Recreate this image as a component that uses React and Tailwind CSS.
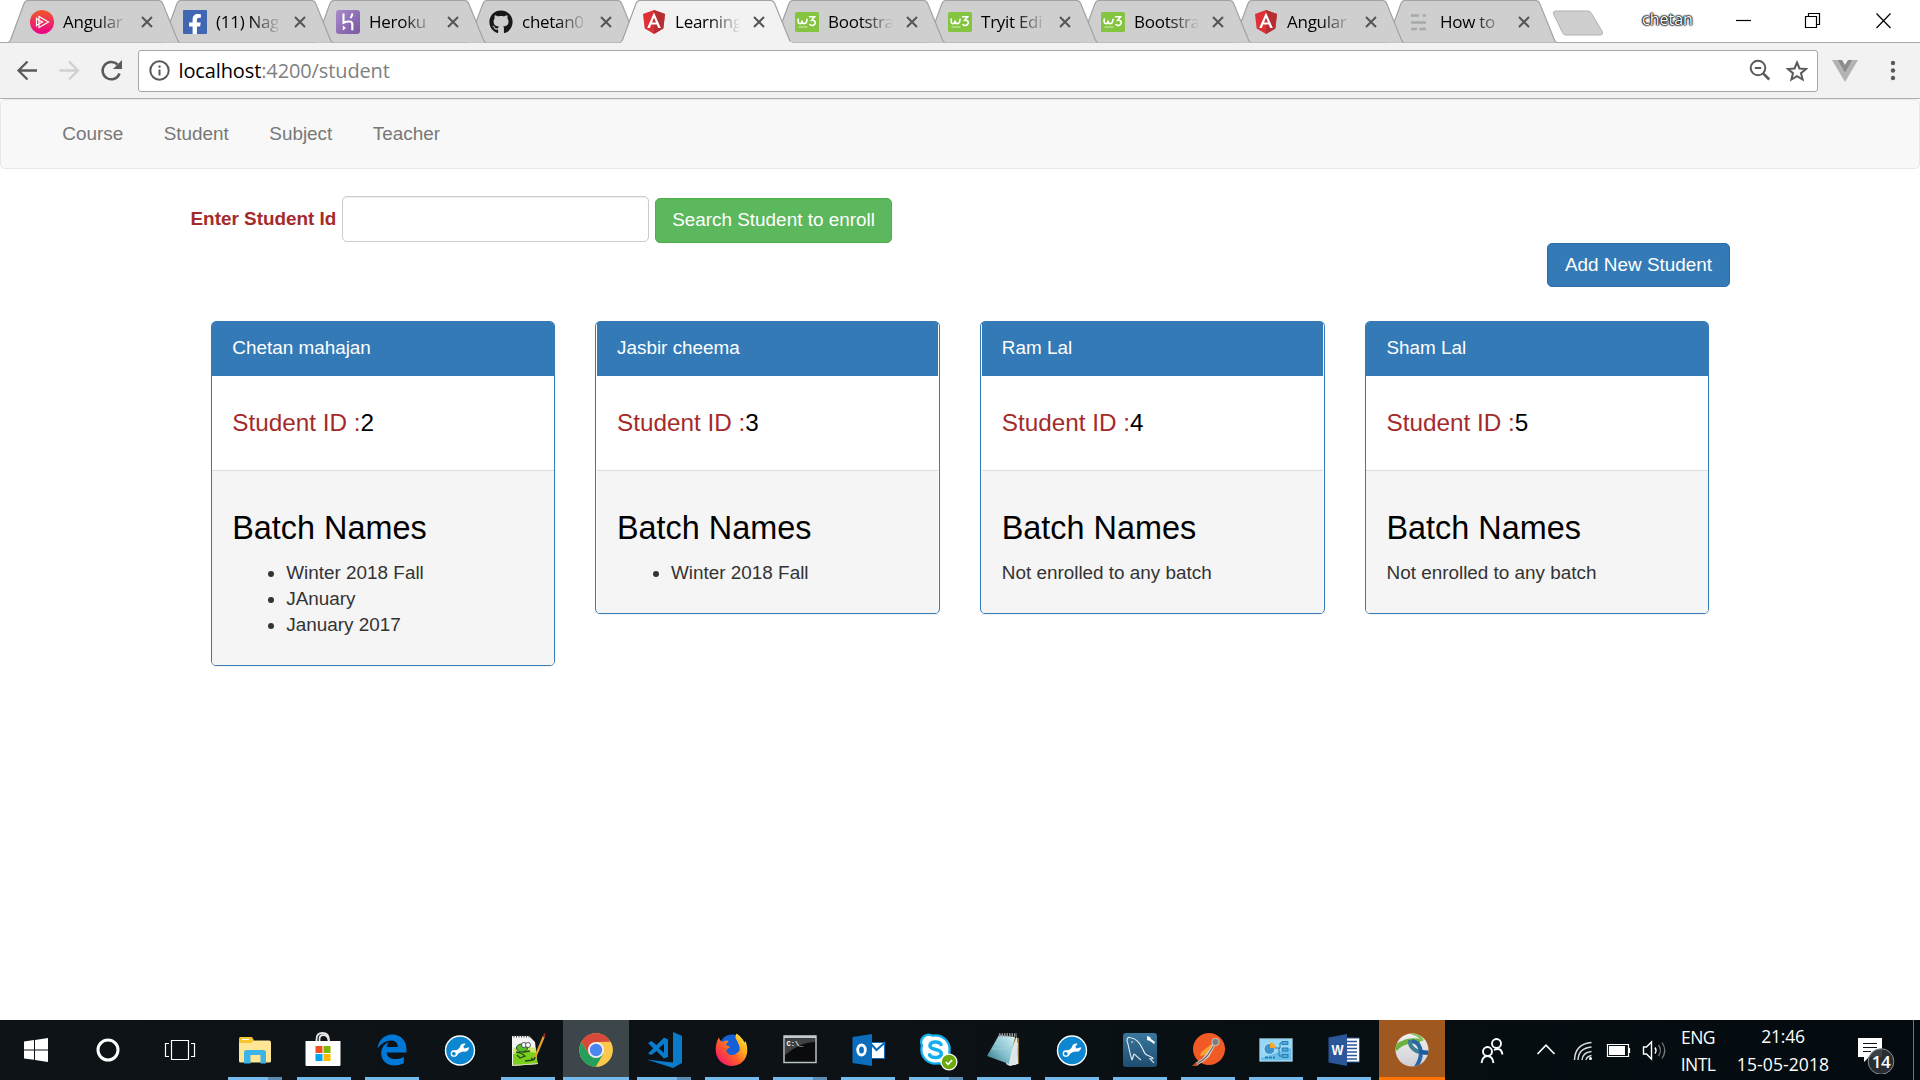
import React from "react";
import { FaFacebookF, FaGithub } from "react-icons/fa";
import { FaEdgeLegacy } from "react-icons/fa6";

/* ---------- favicons ---------- */

const Pluralsight = () => (
  <svg viewBox="0 0 24 24" className="size-6">
    <defs>
      <linearGradient id="psg" x1="0" y1="0" x2="0" y2="1">
        <stop offset="0" stopColor="#f05a28" />
        <stop offset="1" stopColor="#ec008c" />
      </linearGradient>
    </defs>
    <circle cx="12" cy="12" r="12" fill="url(#psg)" />
    <path d="M6.500 7.500v9M6.500 8.800l6 3.200-6 3.200M9 6.500l9.500 5.500L9 17.500z" fill="none" stroke="#fff" strokeWidth="1.200" />
  </svg>
);

const Facebook = () => (
  <span className="relative flex size-6 items-end justify-end overflow-hidden rounded-[1px] bg-[#4267b2] text-white">
    <FaFacebookF className="mr-[1px] -mb-[2px] size-[22px]" />
  </span>
);

const Heroku = () => (
  <span className="flex size-6 items-center justify-center rounded-[3px] bg-linear-to-br from-[#a98bcb] to-[#79589f]">
    <svg viewBox="0 0 24 24" className="size-6" fill="none" stroke="#fff" strokeWidth="2.100">
      <path d="M7.500 3.500v9.300c2-1 4.600-1.500 6.500-1.300 1.700.2 2.300 1.200 2.300 2.800v6" />
      <path d="M16.300 3.500c-.1 1.800-.7 3.100-1.800 4.500" />
      <path d="M6.800 15.500l3 2.400-3 2.500z" fill="#fff" stroke="none" />
    </svg>
  </span>
);

const Angular = () => (
  <svg viewBox="0 0 24 24" className="size-6">
    <path d="M12 0 23 4l-1.700 14.500L12 24l-9.300-5.500L1 4z" fill="#dd3137" />
    <path d="M12 0 23 4l-1.700 14.500L12 24z" fill="#b52f32" />
    <path d="M12 2.600 5.200 18h2.600l1.400-3.500h5.600l1.400 3.500h2.600zM12 7.700l2 4.700h-4z" fill="#fff" fillRule="evenodd" />
  </svg>
);

const W3 = () => (
  <svg viewBox="0 0 24 24" className="size-6">
    <rect y="2" width="24" height="20" rx="1.500" fill="#85c440" />
    <path d="M3.200 9c-.4 3.500.3 4.600 1.900 4.600s2-1.700 2-3.200c0 2 .5 3.200 2 3.200 1.900 0 2.800-1.800 2.900-4.400" fill="none" stroke="#fff" strokeWidth="1.600" strokeLinecap="round" />
    <path d="M14.500 6.800h5l-2.800 3.500c2.500-.3 3.800.8 3.500 2.900-.3 2.400-3.500 3-5.200 1.300" fill="none" stroke="#fff" strokeWidth="1.600" strokeLinecap="round" />
    <path d="M3.500 17h9" stroke="#d4edb9" strokeWidth="1" />
  </svg>
);

const Lines = () => (
  <svg viewBox="0 0 24 24" className="size-6" stroke="#a5abab" strokeWidth="2.600">
    <path d="M4 5.500h8M15.500 5.500h3.500M4 12.500h15M4 19h6M12.500 19h6.500" />
  </svg>
);

const GitHub = () => <FaGithub className="size-6 text-[#1a1718]" />;

const tabs = [
  { title: "Angular", icon: Pluralsight },
  { title: "(11) Nag", icon: Facebook },
  { title: "Heroku |", icon: Heroku },
  { title: "chetan0", icon: GitHub },
  { title: "Learning", icon: Angular, active: true },
  { title: "Bootstra", icon: W3 },
  { title: "Tryit Edi", icon: W3 },
  { title: "Bootstra", icon: W3 },
  { title: "Angular", icon: Angular },
  { title: "How to", icon: Lines },
];

const tabZ = ["z-[10]", "z-[9]", "z-[8]", "z-[7]", "z-20", "z-[5]", "z-[4]", "z-[3]", "z-[2]", "z-[1]"];

function Tab({ title, icon: Icon, active, z }) {
  return (
    <div className={`relative -mr-[19px] h-[43px] w-[172px] shrink-0 ${z}`}>
      <svg viewBox="0 0 172 43" className="absolute inset-0 h-[43px] w-[172px] overflow-visible">
        <path
          d="M-1 42.500Q.8 42 1.500 40L15 3.500Q16.200.5 19 .5H149.500Q152.500.5 153.700 3.500L168.500 40Q169.300 42.300 171 42.500"
          fill={active ? "#f2f2f2" : "#cfcfcf"}
          stroke="#a3a3a3"
          strokeWidth="1.200"
        />
        {active && <path d="M0 42.500H171" stroke="#f2f2f2" strokeWidth="1.600" />}
      </svg>
      <div className="relative flex h-[43px] items-center pl-[21px]">
        <Icon />
        <div className="ml-[9.500px] w-[68px] whitespace-nowrap font-['Open_Sans',sans-serif] text-[17px] leading-[24px] tracking-[-0.300px] text-black [mask-image:linear-gradient(to_right,black_50%,transparent_96%)]">
          {title}
        </div>
        <svg viewBox="0 0 12 12" className="ml-[9.500px] size-3" stroke="#555" strokeWidth="2">
          <path d="M1 1 11 11M11 1 1 11" />
        </svg>
      </div>
    </div>
  );
}

function TabStrip() {
  return (
    <div className="flex h-[43px] border-b border-[#a9a9a9] bg-white">
      <div className="flex h-[43px] w-[1550px] shrink-0 pl-[8.600px]">
        {tabs.map((t, i) => (
          <Tab key={i} {...t} z={tabZ[i]} />
        ))}
      </div>
      <svg viewBox="0 0 54 28" className="mt-[9px] h-7 w-[54px]">
        <path d="M5.500 2H38Q40.500 2 41.500 4.500L52.500 23Q53 26 50.500 26H16Q13.500 26 12.500 23.500L3.500 5Q3 2 5.500 2Z" fill="#cfcfcf" stroke="#b0b0b0" />
      </svg>
      <div className="ml-[38px] mt-[7px] w-[94px] font-['Open_Sans',sans-serif] text-[16px] leading-[24px] text-white [text-shadow:0_0_1px_#000,0_0_1px_#000,0_0_2px_#000,0_0_2px_#000,0_0_2px_#333]">
        chetan
      </div>
      <svg viewBox="0 0 160 20" className="mt-[11px] h-5 w-[160px]" fill="none" stroke="#000" strokeWidth="1.200">
        <path d="M0 9.500H15" />
        <path d="M69.500 5.500h11v11h-11zM72.500 5.500v-3h11v11h-3" />
        <path d="M140.500 2.500l14 14.500M154.500 2.500l-14 14.500" />
      </svg>
    </div>
  );
}

function Toolbar() {
  return (
    <div className="flex h-14 items-center border-b border-[#b0b0b0] bg-[#f2f2f2] pl-[16px]">
      <svg viewBox="0 0 108 24" className="h-6 w-[108px]" fill="none" strokeWidth="2.300">
        <path d="M21 11.500H2.500M11.500 2.500 2.500 11.500l9 9" stroke="#5a5a5a" />
        <path d="M43.500 11.500H62M53 2.500l9 9-9 9" stroke="#d0d0d0" />
        <path d="M103.500 14.500A8.700 8.700 0 1 1 101.500 5.500" stroke="#5a5a5a" strokeWidth="2.500" />
        <path d="M106 1v9h-9z" fill="#5a5a5a" />
      </svg>
      <div className="ml-[14px] flex h-[42px] w-[1680px] items-center rounded-[3px] border border-[#a6a6a6] bg-white pl-[10px] pr-[8px]">
        <svg viewBox="0 0 22 22" className="size-[22px]" fill="none" stroke="#5a5a5a" strokeWidth="2">
          <circle cx="10.500" cy="10.500" r="9.200" />
          <path d="M10.500 9.500v6M10.500 5.500v2.200" />
        </svg>
        <div className="ml-[7.500px] flex-1 font-['Open_Sans',sans-serif] text-[20px] leading-[28px] tracking-[-0.120px] text-[#808080]">
          <span className="text-black">localhost</span>:4200/student
        </div>
        <svg viewBox="0 0 24 24" className="size-6" fill="none" stroke="#5a5a5a" strokeWidth="2">
          <circle cx="10" cy="9" r="7.300" />
          <path d="M6.800 9h6.400" />
          <path d="M15.200 14.300l6 6.200" strokeWidth="2.600" />
        </svg>
        <svg viewBox="0 0 24 24" className="ml-[13px] size-6" fill="none" stroke="#5a5a5a" strokeWidth="2">
          <path d="M12 3.500l2.500 6 6.500.5-5 4.200 1.600 6.300L12 17.100l-5.600 3.400L8 14.200 3 10l6.500-.5z" />
        </svg>
      </div>
      <svg viewBox="0 0 26 24" className="ml-[14px] h-6 w-[26px]">
        <path d="M0 1h5.500L13 14l7.500-13H26L13 23z" fill="#b3b3b3" />
        <path d="M5.500 1H10l3 5 3-5h4.500L13 14z" fill="#8c8c8c" />
      </svg>
      <svg viewBox="0 0 6 24" className="ml-[32px] h-6 w-1.5" fill="#5a5a5a">
        <circle cx="3" cy="4" r="2.200" />
        <circle cx="3" cy="11.500" r="2.200" />
        <circle cx="3" cy="19" r="2.200" />
      </svg>
    </div>
  );
}

/* ---------- page ---------- */

const students = [
  { name: "Chetan mahajan", id: 2, batches: ["Winter 2018 Fall", "JAnuary", "January 2017"] },
  { name: "Jasbir cheema", id: 3, batches: ["Winter 2018 Fall"], gap: true },
  { name: "Ram Lal", id: 4, batches: [], gap: true },
  { name: "Sham Lal", id: 5, batches: [] },
];

function StudentCard({ name, id, batches, gap }) {
  const inset = gap ? "px-[20px]" : "px-[20.500px]";
  return (
    <div className={`overflow-hidden rounded-[5px] border border-[#337ab7] bg-white shadow-[0_1px_1px_rgba(0,0,0,0.05)] ${gap ? "-ml-[0.500px] px-px" : ""}`}>
      <div className={`h-[54px] bg-[#337ab7] pt-[13px] leading-[26px] text-white ${inset}`}>{name}</div>
      <div className={`h-[94px] pt-[34px] text-[24.300px] leading-[26px] text-black ${inset}`}>
        <span className="text-[#a52a2a]">Student ID :</span>
        {id}
      </div>
      <div className={`border-t border-[#ddd] bg-[#f5f5f5] pt-[39px] pb-[27px] ${inset}`}>
        <h3 className="mb-[14px] text-[32.400px] leading-[36px] text-black">Batch Names</h3>
        {batches.length > 0 ? (
          <ul className="list-disc pl-[54px]">
            {batches.map((b) => (
              <li key={b} className="leading-[26px]">{b}</li>
            ))}
          </ul>
        ) : (
          <p className="leading-[26px]">Not enrolled to any batch</p>
        )}
      </div>
    </div>
  );
}

function Page() {
  return (
    <main className="flex-1 bg-white font-['Liberation_Sans',Arial,sans-serif] text-[18.900px] text-[#333]">
      <nav className="flex h-[70px] rounded-[5px] border border-[#e7e7e7] bg-[#f8f8f8] pl-[41px] pt-[20px] leading-[27px] text-[#777]">
        {["Course", "Student", "Subject", "Teacher"].map((n) => (
          <a key={n} className="px-[20.250px]">{n}</a>
        ))}
      </nav>
      <div className="mx-auto w-[1539px] pt-[27px]">
        <div className="flex h-[47px]">
          <label className="w-[151px] pt-[9px] font-bold leading-[27px] text-[#a52a2a]">Enter Student Id</label>
          <input className="h-[46px] w-[307px] rounded-[5px] border border-[#ccc] bg-white shadow-[inset_0_1px_1px_rgba(0,0,0,0.075)]" />
          <button className="ml-[6px] mt-[2px] h-[45px] w-[237px] rounded-[5px] border border-[#4cae4c] bg-[#5cb85c] pl-px text-white">
            Search Student to enroll
          </button>
        </div>
        <div className="flex justify-end">
          <button className="h-[44px] w-[183px] rounded-[5px] border border-[#2e6da4] bg-[#337ab7] pl-px pt-px text-white">
            Add New Student
          </button>
        </div>
        <div className="mt-[34px] grid grid-cols-4 items-start gap-x-[40.500px] px-[20.250px]">
          {students.map((s) => (
            <StudentCard key={s.id} {...s} />
          ))}
        </div>
      </div>
    </main>
  );
}

/* ---------- taskbar icons, drawn on a 40 by 40 grid ---------- */

const Ico = ({ children, className = "" }) => (
  <svg viewBox="0 0 40 40" className={`size-10 ${className}`}>{children}</svg>
);

const Explorer = () => (
  <Ico>
    <path d="M4 8.500q0-1.500 1.500-1.500H17l2 3.500V15H4z" fill="#f7c52f" />
    <path d="M7 9.500h7" stroke="#fff" strokeWidth="1" />
    <path d="M4 13h12l3-2.500h15q2 0 2 2V31q0 1.500-1.500 1.500h-29Q4 32.500 4 31z" fill="#ffe694" />
    <path d="M9 33.500V22.500Q9 20 11.500 20h17Q31 20 31 22.500v11h-5.500V25h-10v8.500z" fill="#3cb4e7" />
  </Ico>
);

const Store = () => (
  <Ico className="-ml-[2px]">
    <path d="M13.500 12V9.500q0-6.500 6-6.500t6.500 6.500V12M16.500 12V9q0-4 4-4t5 5v2" fill="none" stroke="#e5e5e5" strokeWidth="1.800" />
    <path d="M2.500 11h35v24q0 1-1 1h-33q-1 0-1-1z" fill="#fff" />
    <path d="M12.500 16h7v7h-7z" fill="#f25022" />
    <path d="M20.500 16h7v7h-7z" fill="#7fba00" />
    <path d="M12.500 24h7v7h-7z" fill="#00a4ef" />
    <path d="M20.500 24h7v7h-7z" fill="#ffb900" />
  </Ico>
);

const Edge = () => <FaEdgeLegacy className="size-[32px] text-[#0078d7]" />;

const Wrench = () => (
  <Ico>
    <circle cx="20" cy="20.500" r="14.500" fill="#0c87cf" stroke="#fff" strokeWidth="1.400" />
    <circle cx="14" cy="23.500" r="2.600" fill="none" stroke="#fff" strokeWidth="1.500" />
    <path d="M12.500 20.800C16 20.500 19 19.500 20 17c.3-2.700 3-4 5.700-3.200l-2.400 2.800 1 2 4.900-1.300c-.2 3.200-2.700 5-5.900 4.300-2.600.2-4.800 1.700-6.800 4.400z" fill="#fff" />
    <circle cx="14" cy="23.700" r="1.700" fill="#0c87cf" />
  </Ico>
);

const NotepadPP = () => (
  <Ico>
    <path d="M4 6h17l6 6 2.500 22-25.500 2z" fill="#f4f4f4" />
    <path d="M5 20l23-1 1.500 15L5 35.500z" fill="#7bd01c" />
    <path d="M5 18q11-3 22.500 0l.5 5q-12-3-23 1z" fill="#cdea70" />
    <path d="M5.500 6.500h16" stroke="#444" strokeWidth="2" strokeDasharray="1 1.500" />
    <ellipse cx="14" cy="18" rx="5.500" ry="4" fill="#58b92c" stroke="#224d17" />
    <circle cx="16" cy="15" r="2.500" fill="#fff" stroke="#333" strokeWidth=".8" />
    <circle cx="20" cy="15" r="2.500" fill="#fff" stroke="#333" strokeWidth=".8" />
    <path d="M8 22l5 1 4 3-5 2-3-3M15 22l7-1M17 31l8-1M23 28l3 2" fill="none" stroke="#234a18" strokeWidth="1.300" />
    <path d="M4 35.500l26-2" stroke="#d7d9b4" />
    <path d="M27 27.500 36 6" stroke="#e7a22d" strokeWidth="2.200" />
    <path d="M35.500 7l1.500-3.500" stroke="#8d2330" strokeWidth="2" />
    <path d="M26 30l1-3" stroke="#46362a" strokeWidth="1.500" />
  </Ico>
);

const Chrome = () => (
  <Ico>
    <circle cx="20" cy="20" r="16.700" fill="#fbc84b" />
    <path d="M5.500 11.700A16.700 16.700 0 0 0 20 36.700L27.400 24 20 20l-7.200 4z" fill="#269f5c" />
    <path d="M5.500 11.700A16.700 16.700 0 0 1 34.500 11.700L20 12l-7.400 12z" fill="#d8483b" />
    <path d="M20 12h14.700A16.700 16.700 0 0 1 20 36.700L27.400 24z" fill="#fbc84b" />
    <circle cx="20" cy="20" r="8" fill="#f1f1f1" />
    <circle cx="20" cy="20" r="6.200" fill="#4a86ee" />
  </Ico>
);

const VSCode = () => (
  <Ico>
    <path d="M29 2l9 4v27l-9 5L2.500 29.500l26.500 3z" fill="#0a7acb" />
    <path
      d="M4 13l3.500-2 5 4L20 7.500l4 2v17.500l-4 1.500-7.500-7.500-5 4L4 23.500l5.200-5.200zM20 13.500l-5 4.700 5 4.800z"
      fill="#0a7acb"
      fillRule="evenodd"
    />
  </Ico>
);

const Firefox = () => (
  <Ico>
    <defs>
      <linearGradient id="ffg" x1="1" y1="0" x2=".1" y2=".9">
        <stop offset="0" stopColor="#fff44f" />
        <stop offset=".35" stopColor="#ffb01c" />
        <stop offset=".65" stopColor="#ff5a2a" />
        <stop offset="1" stopColor="#f5156c" />
      </linearGradient>
    </defs>
    <circle cx="20" cy="17" r="12.500" fill="#1560d8" />
    <path d="M7 7.500c.5 2 1.500 3.500 3.500 4.500 2-1.500 4-1.500 6-1l-3 4c2 1 4 1 4.500 1.500 0 1-2 2-3.500 3-.5 3 2 5.500 5.500 5.500 4 0 5-2.500 7.500-4 1-5-2-9-4-13 0-2 0-3 1-4.500 4 3 6 5 8 9l1-1.500c3.500 9 2 18-5 22.500C18 40 4 33 3.700 20.500 3.500 16 5 10 7 7.500z" fill="url(#ffg)" />
  </Ico>
);

const Terminal = () => (
  <Ico>
    <rect x="4" y="6" width="32" height="26.500" fill="#0a0b0c" stroke="#b9c1c5" strokeWidth="1.500" />
    <path d="M4 7h32" stroke="#c3cbd0" strokeWidth="2.500" />
    <path d="M5 9h30v3Q20 12 5 25z" fill="#3d4142" />
    <text x="6.500" y="16" fill="#fff" fontSize="7" fontFamily="Liberation Mono, monospace" fontWeight="700">C:\_</text>
  </Ico>
);

const Outlook = () => (
  <Ico>
    <path d="M22 12.500h14.500v16H22z" fill="#fff" stroke="#0a6ebd" />
    <path d="M23 14l5.500 6L37 12.500" fill="none" stroke="#0a6ebd" strokeWidth="2.200" />
    <path d="M4.500 7 24 4v32L4.500 33z" fill="#0b6dbc" />
    <ellipse cx="13.500" cy="20" rx="3.800" ry="5" fill="none" stroke="#fff" strokeWidth="2.800" />
  </Ico>
);

const Skype = () => (
  <span className="relative">
    <svg viewBox="0 0 40 40" className="size-10">
      <g fill="#12aeee">
        <circle cx="19.500" cy="19.500" r="15.300" />
        <circle cx="12.500" cy="12" r="8.600" />
        <circle cx="27" cy="27" r="8.500" />
      </g>
      <g fill="#fff">
        <circle cx="19.500" cy="19.500" r="13" />
        <circle cx="12.800" cy="12.300" r="6.500" />
        <circle cx="26.500" cy="26.500" r="6.500" />
      </g>
      <path d="M25 14.500C23 10.800 14 11.300 14 15.800c0 5 11.300 2.500 11.300 7.700 0 5-9.800 5.300-11.800 1.200" fill="none" stroke="#12aeee" strokeWidth="3.500" strokeLinecap="round" />
    </svg>
    <svg viewBox="0 0 18 18" className="absolute -right-[2px] top-[23px] size-[18px]">
      <circle cx="9" cy="9" r="7.900" fill="#6bab0c" stroke="#fff" strokeWidth="1.300" />
      <path d="M5.800 9l2.300 2.300 4-4.300" fill="none" stroke="#fff" strokeWidth="1.700" />
    </svg>
  </span>
);

const Notepad = () => (
  <Ico>
    <defs>
      <linearGradient id="npg" x1="1" y1="0" x2="0" y2="1">
        <stop offset="0" stopColor="#d8f3f6" />
        <stop offset=".55" stopColor="#80bdca" />
        <stop offset="1" stopColor="#2c6f7e" />
      </linearGradient>
    </defs>
    <path d="M29 8l6 0v26l-7-1z" fill="#8d6d36" />
    <path d="M33 6l1 28-8 2-4-2z" fill="#e7edef" />
    <path d="M15 5l16 2-6 27-22-8z" fill="url(#npg)" />
    <path d="M15 5h18" stroke="#9a9a9a" strokeWidth="3.500" strokeDasharray="1.500 1" />
    <path d="M31 12l-5 22 6 1 2-22z" fill="#dce6e9" />
    <path d="M11 14h13M8 19h14" stroke="#a6d3da" strokeWidth=".7" />
  </Ico>
);

const Workbench = () => (
  <Ico>
    <defs>
      <linearGradient id="wbg" x1="0" y1="0" x2="0" y2="1">
        <stop offset="0" stopColor="#39769d" />
        <stop offset="1" stopColor="#1f4e70" />
      </linearGradient>
    </defs>
    <rect x="3" y="3" width="34" height="34" rx="3" fill="url(#wbg)" />
    <path d="M12 30C10 24 9 19 8 14 6 10 7 7 10 7.500c7 1 10 6 13 12 1 3 2 5 5 6 2 1 5 2 5 3l-3 .3 4 4M12 30l2-6c2 1 4 4 7 6" fill="none" stroke="#dfe9ef" strokeWidth="1.200" />
    <circle cx="12" cy="12" r=".8" fill="#fff" />
    <path d="M27 6l3 1 1 2 4 3-1 2-4-3-3-1z" fill="#fff" />
  </Ico>
);

const Postman = () => (
  <Ico>
    <circle cx="21" cy="19" r="16" fill="#f15a24" />
    <path d="M24 13.500 13.500 22l-1.500 4 5-1 8-8z" fill="#fba134" />
    <circle cx="27.500" cy="12" r="3.700" fill="#7e7e7e" stroke="#c9c4bd" strokeWidth="1" />
    <path d="M25.500 15.500 20 25.500l-5 4.500L8.500 34M23 20l-7 9" fill="none" stroke="#d8d4ce" strokeWidth="3" />
    <path d="M25.500 16l-6 9.500-4 4-6 4" fill="none" stroke="#64605c" strokeWidth="1.100" />
    <path d="M4 36l4-4 2 4z" fill="#c94423" />
  </Ico>
);

const ControlPanel = () => (
  <Ico>
    <rect x="4" y="9" width="32" height="22" fill="#68bfec" stroke="#b6e3f7" strokeWidth="1.200" />
    <path d="M5 10h30v8L5 28z" fill="#97d8f5" />
    <circle cx="13.500" cy="19" r="5.500" fill="#3c95cf" stroke="#d8f0fa" strokeWidth=".8" />
    <path d="M14 18v-5.500a5.500 5.500 0 0 1 5.500 5.500z" fill="#f7a62c" />
    <path d="M19 18h5v-5h3M23 18v8h4" fill="none" stroke="#236d9d" strokeWidth=".9" />
    <path d="M26 11.500h6v3h-6zM26 18h6v3h-6zM26 24.500h6v3h-6z" fill="#4aa9e0" stroke="#236d9d" strokeWidth=".8" />
    <path d="M9 27.500h10" stroke="#2a6c9a" strokeWidth="1.500" strokeDasharray="3 1" />
  </Ico>
);

const Word = () => (
  <Ico>
    <path d="M22 8h13.500v24H22z" fill="#fff" stroke="#2b579a" />
    <path d="M23 11.500h10M23 15h10M23 18.500h10M23 22h10M23 25.500h10M23 29h10" stroke="#2b579a" strokeWidth="1.400" />
    <path d="M4.500 7.500 23 4v32L4.500 32.500z" fill="#2b579a" />
    <text x="13.500" y="25" textAnchor="middle" fill="#fff" fontSize="14" fontWeight="700" fontFamily="Liberation Sans, sans-serif" textLength="12" lengthAdjust="spacingAndGlyphs">W</text>
  </Ico>
);

const Presenter = () => (
  <Ico>
    <defs>
      <clipPath id="ball"><circle cx="20" cy="20" r="16.500" /></clipPath>
      <linearGradient id="orb" x1="0" y1="0" x2="0" y2="1">
        <stop offset="0" stopColor="#f0f0f2" />
        <stop offset="1" stopColor="#cfd0d4" />
      </linearGradient>
    </defs>
    <circle cx="20" cy="20" r="16.500" fill="url(#orb)" />
    <g clipPath="url(#ball)" fill="none">
      <path d="M3 19C9 12 20 9 28 12" stroke="#6ab23c" strokeWidth="5" />
      <path d="M20 3c6 1 9 4 10 8" stroke="#86c25b" strokeWidth="3.500" />
      <path d="M18 10c-1 7 5 13 18 13" stroke="#3d7f8e" strokeWidth="4" />
      <path d="M24 37c4-6 6-13 4-19-1-4-4-6-8-7" stroke="#2767a8" strokeWidth="4" />
      <path d="M28 21c4 2 7 2 10 1" stroke="#1c5aa0" strokeWidth="4" />
    </g>
  </Ico>
);

const apps = [
  { icon: Explorer, run: "multi" },
  { icon: Store, run: "one" },
  { icon: Edge, run: "one" },
  { icon: Wrench },
  { icon: NotepadPP, run: "one" },
  { icon: Chrome, run: "focus" },
  { icon: VSCode, run: "multi" },
  { icon: Firefox, run: "one" },
  { icon: Terminal, run: "multi" },
  { icon: Outlook, run: "one" },
  { icon: Skype, run: "multi" },
  { icon: Notepad, run: "one" },
  { icon: Wrench, run: "one" },
  { icon: Workbench, run: "one" },
  { icon: Postman, run: "one" },
  { icon: ControlPanel, run: "one" },
  { icon: Word, run: "one" },
  { icon: Presenter, run: "alert" },
];

function AppSlot({ icon: Icon, run }) {
  const bg = run === "focus" ? "bg-[#3d464b]" : run === "alert" ? "bg-[#9f581f]" : "";
  const wide = run === "focus" || run === "alert";
  return (
    <div className="flex justify-center">
      <div className={`flex h-[60px] w-[66px] flex-col items-center ${bg}`}>
        <div className="flex h-[57px] items-center justify-center pt-[3px]">
          <Icon />
        </div>
        {run && (
          <div className={`flex h-[3px] ${wide ? "w-full" : "w-[54px]"} ${run === "alert" ? "bg-[#ff7300]" : "bg-[#76b9ed]"}`}>
            {run === "multi" && <div className="ml-auto w-[14px] bg-[#5d8cb2]" />}
          </div>
        )}
      </div>
    </div>
  );
}

function Taskbar() {
  return (
    <footer className="flex h-[60px] shrink-0 bg-linear-to-r from-[#0d1316] via-[#0b1114] to-[#030b10] font-['Open_Sans',sans-serif] text-white">
      <div className="grid w-[219.500px] shrink-0 grid-cols-[72px_72px_72px] items-center justify-items-center">
        <svg viewBox="0 0 24 24" className="size-6" fill="#fff">
          <path d="M0 3.500 10 2.100V11.500H0zM11 2 24 0v11.500H11zM0 12.500h10v9.300L0 20.500zM11 12.500h13V24l-13-2z" />
        </svg>
        <svg viewBox="0 0 24 24" className="size-6" fill="none" stroke="#fff" strokeWidth="3">
          <circle cx="12" cy="12" r="10" />
        </svg>
        <svg viewBox="0 0 32 24" className="h-6 w-8" fill="none" stroke="#fff" strokeWidth="1.200">
          <path d="M7.500 2.500h17v19h-17zM5 5.500H1.500v13H5M27 5.500h3.500v13H27" />
        </svg>
      </div>
      <div className="grid w-[1226.500px] shrink-0 grid-cols-[70px_68px_69px_67px_repeat(14,68px)]">
        {apps.map((a, i) => (
          <AppSlot key={i} {...a} />
        ))}
      </div>
      <svg viewBox="0 0 240 60" className="h-[60px] w-[225px]" preserveAspectRatio="xMinYMin slice" fill="none" stroke="#fff">
        <g strokeWidth="1.900">
          <circle cx="50.500" cy="23.500" r="4.500" />
          <path d="M48 30q7-3.500 8.500 4.500" />
          <circle cx="41.500" cy="31.500" r="4.500" />
          <path d="M35.500 43q1-7 6-7t6 7" />
        </g>
        <path d="M91.500 34l8.500-8.800 8.500 8.800" strokeWidth="1.600" />
        <g strokeWidth="1.400" opacity=".85">
          <path d="M128.500 40Q129 24 145.500 22.500M132 40Q132.500 28 145.500 27M136 40Q136.500 32.500 145.500 31.500" />
          <path d="M140 40Q140.500 36.500 145.500 35.500" />
        </g>
        <circle cx="144.500" cy="38.500" r="1.500" fill="#fff" stroke="none" />
        <path d="M161.500 24.500h21v12h-21zM183.500 28v5" strokeWidth="1.200" />
        <path d="M163 26h16v9h-16z" fill="#fff" stroke="none" />
        <path d="M197.500 27v7h3l5 5V22l-5 5z" strokeWidth="1.400" />
        <path d="M209 27.500q2 3 0 6" strokeWidth="1.400" />
        <path d="M212.500 25q4 5.500 0 11M216 22.500q5.500 8 0 16" strokeWidth="1.300" stroke="#777" />
      </svg>
      <div className="mt-[4px] flex w-[54px] flex-col items-center text-[17.500px] leading-[27px] tracking-[-0.600px]">
        <span>ENG</span>
        <span>INTL</span>
      </div>
      <div className="mt-[2px] flex w-[116px] flex-col items-center text-[17.500px] leading-[28px]">
        <span className="tracking-[-0.200px]">21:46</span>
        <span className="tracking-[0.100px]">15-05-2018</span>
      </div>
      <div className="relative ml-[17px] mt-[18px] h-9 w-[38px]">
        <svg viewBox="0 0 38 36" className="h-9 w-[38px]">
          <path d="M0 0h24v19H11l-5 5v-5H0z" fill="#fff" />
          <path d="M5 5.500h14M5 9.500h14M5 13.500h8" stroke="#0b1114" strokeWidth="1.200" />
          <circle cx="23" cy="23.500" r="12.800" fill="#2c3235" fillOpacity=".92" stroke="#8c9092" />
        </svg>
        <span className="absolute left-[10px] top-[11px] w-[26px] text-center text-[17px] font-semibold leading-[26px] tracking-[-0.500px]">14</span>
      </div>
      <div className="ml-auto mr-[6px] w-[1.500px] bg-[#6e7376]" />
    </footer>
  );
}

export default function App() {
  return (
    <div className="flex h-[1080px] w-[1920px] flex-col overflow-hidden bg-white">
      <TabStrip />
      <Toolbar />
      <Page />
      <Taskbar />
    </div>
  );
}
